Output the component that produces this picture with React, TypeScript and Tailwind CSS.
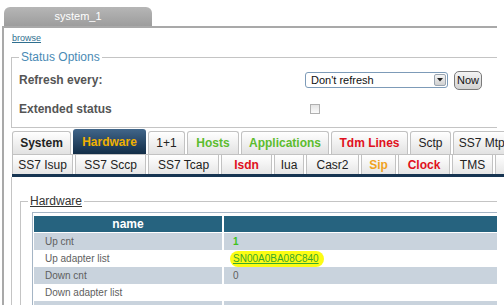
const row1 = [
  { label: "System", w: "w-[59px]", cls: "font-bold text-[#222]" },
  { label: "Hardware", w: "w-[73px]", active: true, cls: "" },
  { label: "1+1", w: "w-[37px]", cls: "text-[#222]" },
  { label: "Hosts", w: "w-[52px]", cls: "font-bold text-[#5cbc2e]" },
  { label: "Applications", w: "w-[88px]", cls: "font-bold text-[#5cbc2e]" },
  { label: "Tdm Lines", w: "w-[77px]", cls: "font-bold text-[#e01020]" },
  { label: "Sctp", w: "w-[41px]", cls: "text-[#222]" },
  { label: "SS7 Mtp3", w: "w-[64px]", cls: "text-[#222]" },
];

const row2 = [
  { label: "SS7 Isup", w: "w-[61px]", cls: "text-[#222]" },
  { label: "SS7 Sccp", w: "w-[71px]", cls: "text-[#222]" },
  { label: "SS7 Tcap", w: "w-[71px]", cls: "text-[#222]" },
  { label: "Isdn", w: "w-[51px]", cls: "font-bold text-[#e01020]" },
  { label: "Iua", w: "w-[30px]", cls: "text-[#222]" },
  { label: "Casr2", w: "w-[53px]", cls: "text-[#222]" },
  { label: "Sip", w: "w-[35px]", cls: "font-bold text-[#f0a21e]" },
  { label: "Clock", w: "w-[52px]", cls: "font-bold text-[#e01020]" },
  { label: "TMS", w: "w-[41px]", cls: "text-[#222]" },
  { label: "", w: "w-[40px]", cls: "text-[#222]" },
];

export default function App() {
  return (
    <div className="h-[305px] w-[504px] overflow-hidden bg-white font-['Liberation_Sans',Arial,sans-serif]">
      {/* page tab */}
      <div className="ml-[4px] mt-[7px] h-[19px] w-[148px] rounded-t-[6px] bg-gradient-to-b from-[#b6b6b6] to-[#9d9d9d] text-center text-[11px] leading-[19px] text-white">
        system_1
      </div>

      <div className="ml-[2px] w-[495px] border-l-2 border-t-2 border-[#a9a9a9]">
        <div className="pl-[8px] pt-[5px] text-[9px] leading-[11px]">
          <a href="#" className="text-[#2f6f8f] underline">
            browse
          </a>
        </div>

        {/* status options */}
        <fieldset className="ml-[7px] mt-[6px] border border-r-0 border-[#c4c4c4] pb-[8px] pl-[7px] pt-[6px]">
          <legend className="px-[2px] text-[12px] leading-[14px] text-[#4a8ab4]">
            Status Options
          </legend>
          <div className="flex h-[20px] items-center">
            <span className="w-[286px] text-[12px] font-bold text-[#555]">
              Refresh every:
            </span>
            <div className="flex h-[16px] w-[143px] items-center justify-between rounded-[3px] border border-[#7d9bb8] pl-[5px] pr-[1px]">
              <span className="text-[11px] leading-[14px] text-[#111]">Don't refresh</span>
              <span className="flex h-[12px] w-[12px] items-center justify-center rounded-[2px] border border-[#9aa5b0] bg-gradient-to-b from-[#f4f4f4] to-[#d0d0d0]">
                <svg width="6" height="4" viewBox="0 0 6 4">
                  <path d="M0 0h6L3 3.5z" fill="#222" />
                </svg>
              </span>
            </div>
            <button
              type="button"
              className="ml-[6px] h-[19px] rounded-[5px] border border-[#7a7a7a] bg-gradient-to-b from-[#f4f4f4] to-[#d2d2d2] px-[2px] text-[11px] leading-[14px] text-[#111]"
            >
              Now
            </button>
          </div>
          <div className="mt-[9px] flex h-[20px] items-center">
            <span className="w-[286px] text-[12px] font-bold text-[#555]">
              Extended status
            </span>
            <span className="ml-[5px] h-[10px] w-[10px] border border-[#b0b0b0] bg-gradient-to-b from-[#e4e4e4] to-[#fbfbfb]" />
          </div>
        </fieldset>

        {/* tabs */}
        <div className="ml-[8px] mt-[1px] w-[500px] whitespace-nowrap text-[12px]">
          <div className="flex h-[25px] items-end gap-[2px]">
            {row1.map((t) =>
              t.active ? (
                <div
                  key={t.label}
                  className={`${t.w} flex h-[25px] shrink-0 items-center justify-center rounded-t-[3px] bg-gradient-to-b from-[#41668a] to-[#132e48] font-bold text-[#f0b000]`}
                >
                  {t.label}
                </div>
              ) : (
                <div
                  key={t.label}
                  className={`${t.w} ${t.cls} flex h-[23px] shrink-0 items-center justify-center rounded-t-[3px] border-x border-t border-[#c2c2c2] bg-gradient-to-b from-[#ffffff] to-[#e2e2e2]`}
                >
                  {t.label}
                </div>
              )
            )}
          </div>
          <div className="flex h-[20px] gap-[2px] border-t border-[#c2c2c2]">
            {row2.map((t, i) => (
              <div
                key={i}
                className={`${t.w} ${t.cls} flex h-[19px] shrink-0 items-center justify-center border-x border-[#c2c2c2] bg-gradient-to-b from-[#ffffff] to-[#e6e6e6]`}
              >
                {t.label}
              </div>
            ))}
          </div>
          <div className="h-[3px] w-[492px] bg-[#173552]" />
        </div>

        {/* tab panel */}
        <div className="ml-[7px] border-l border-[#c4c4c4] pt-[17px]">
          <fieldset className="ml-[8px] border border-r-0 border-[#c4c4c4] pl-[7px] pt-[4px]">
            <legend className="px-[2px] text-[12px] leading-[14px] text-[#333] underline">
              Hardware
            </legend>
            <div className="ml-[4px] border-l border-t border-[#a5b5c5] pl-[1px] pt-[3px] text-[10px] text-[#5e5e5e]">
              <div className="flex h-[16px] gap-[2px] bg-white">
                <div className="flex w-[188px] items-center justify-center bg-[#26637f] text-[12px] font-bold text-white">
                  name
                </div>
                <div className="flex-1 bg-[#26637f]" />
              </div>
              <div className="mt-[1px]">
                <div className="flex h-[17px] items-center gap-[2px]">
                  <div className="flex h-full w-[188px] items-center bg-[#c9d3dd] pl-[11px]">Up cnt</div>
                  <div className="flex h-full flex-1 items-center bg-[#c9d3dd] pl-[9px] font-bold text-[#3fc21d]">1</div>
                </div>
                <div className="flex h-[17px] items-center gap-[2px]">
                  <div className="flex h-full w-[188px] items-center pl-[11px]">Up adapter list</div>
                  <div className="flex h-full flex-1 items-center pl-[6px]">
                    <span className="rounded-[8px] bg-[#fcfc14] px-[3px] pr-[5px] leading-[16px]">
                      <a href="#" className="text-[#3aa82a] underline">
                        SN00A0BA08C840
                      </a>
                    </span>
                  </div>
                </div>
                <div className="flex h-[17px] items-center gap-[2px]">
                  <div className="flex h-full w-[188px] items-center bg-[#c9d3dd] pl-[11px]">Down cnt</div>
                  <div className="flex h-full flex-1 items-center bg-[#c9d3dd] pl-[9px]">0</div>
                </div>
                <div className="flex h-[17px] items-center gap-[2px]">
                  <div className="flex h-full w-[188px] items-center pl-[11px]">Down adapter list</div>
                  <div className="flex-1" />
                </div>
                <div className="flex h-[17px] items-center gap-[2px]">
                  <div className="h-full w-[188px] bg-[#c9d3dd]" />
                  <div className="h-full flex-1 bg-[#c9d3dd]" />
                </div>
              </div>
            </div>
          </fieldset>
        </div>
      </div>
    </div>
  );
}
